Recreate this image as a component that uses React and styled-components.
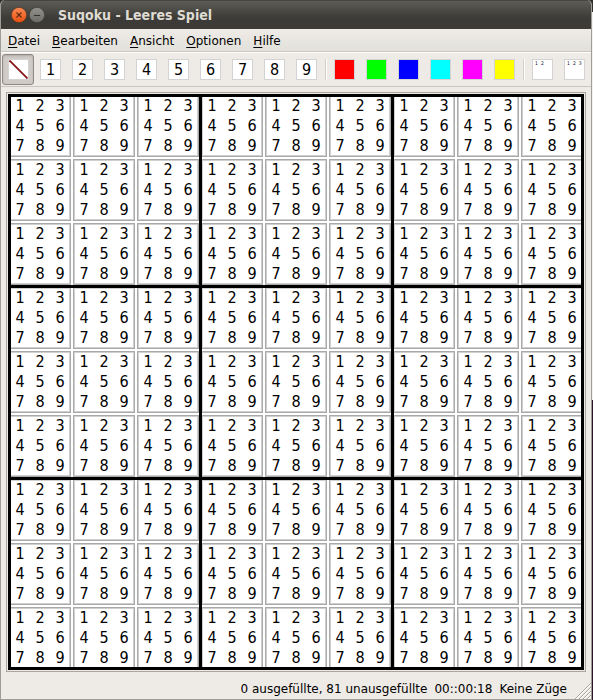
import React, { useState } from "react";
import styled, { createGlobalStyle } from "styled-components";

const GlobalStyle = createGlobalStyle`
  *, *::before, *::after { box-sizing: border-box; }
  body {
    margin: 0;
    background: linear-gradient(#2f2e2b 0 12px, #f2f1f0 12px 400px, #2c1428 400px);
    font-family: "DejaVu Sans", sans-serif;
    font-size: 12px;
    color: #000;
  }
  button { font: inherit; color: inherit; margin: 0; padding: 0; border: 0; background: none; }
`;

const Window = styled.main`
  display: flex;
  flex-direction: column;
  min-height: 100vh;
  margin-right: 1px;
  border: 1px solid #a09c97;
  border-top: 0;
  border-radius: 5px 5px 0 0;
  overflow: hidden;
  background: #eeebe7;
`;

const TitleBar = styled.header`
  display: flex;
  align-items: center;
  gap: 2px;
  height: 29px;
  margin: 0 -1px;
  padding: 0 11px 1px;
  border-top: 1px solid #454440;
  background: linear-gradient(#5d5c56, #3c3b37 60%);
`;

const Title = styled.h1`
  margin: 0 0 0 11px;
  font-family: "DejaVu Sans Condensed", "DejaVu Sans", sans-serif;
  font-size: 14px;
  line-height: 20px;
  font-weight: 700;
  color: #dfdbd2;
`;

const WindowButton = styled.button`
  display: flex;
  width: 16px;
  height: 16px;
`;

const MenuBar = styled.nav`
  display: flex;
  gap: 12px;
  height: 24px;
  padding: 1px 7px 0;
  align-items: center;
  background: linear-gradient(#efebe7, #e1e0d9);
  border-bottom: 1px solid #fff;
  box-shadow: inset 0 -1px #c9c6c1;
`;

const MenuItem = styled.button`
  line-height: 20px;
  &::first-letter { text-decoration: underline; text-underline-offset: 2px; }
`;

const ToolBar = styled.div`
  display: flex;
  height: 34px;
  padding: 1px 0 1px 1px;
  border-bottom: 1px solid #c9c6c1;
`;

const Tool = styled.button`
  display: flex;
  flex: none;
  align-items: center;
  justify-content: center;
  width: 32px;
  height: 31px;
  border: 1px solid ${(p) => (p.$active ? "#918b86" : "transparent")};
  border-radius: 3px;
  background: ${(p) => (p.$active ? "#d0cbc6" : "transparent")};
  box-shadow: ${(p) => (p.$active ? "inset 0 1px 2px #b0aaa5" : "none")};
  padding-left: 1px;
`;

const Swatch = styled.span`
  display: flex;
  justify-content: ${(p) => (p.$small ? "flex-start" : "center")};
  gap: 3px;
  width: 21px;
  height: 21px;
  padding: ${(p) => (p.$small ? "0 2px" : "0")};
  border: 1px solid #d3d3d3;
  background: ${(p) => p.$fill || "#fff"};
  font-family: "DejaVu Sans Condensed", "DejaVu Sans", sans-serif;
  font-size: ${(p) => (p.$small ? "5px" : "16px")};
  line-height: ${(p) => (p.$small ? "7px" : "20px")};
  color: ${(p) => (p.$small ? "#222" : "#000")};
`;

const Separator = styled.span`
  flex: none;
  width: 2px;
  height: 21px;
  margin: 5px 1px 0 3px;
  border-left: 1px solid #d3d0cb;
  background: #fff;
`;

const Frame = styled.section`
  margin: 5px 5px 0;
  padding: 1px;
  border: 1px solid #aaa59f;
`;

const Board = styled.div`
  position: relative;
  display: grid;
  grid-template-columns: repeat(3, 1fr);
  background: #fff;
  &::after {
    content: "";
    position: absolute;
    inset: 0;
    border: 3px solid #000;
    pointer-events: none;
  }
`;

const Block = styled.div`
  position: relative;
  display: grid;
  grid-template-columns: repeat(3, 1fr);
  &::after {
    content: "";
    position: absolute;
    inset: 0;
    border: solid #000;
    border-width: 2px 1px 1px 2px;
    pointer-events: none;
  }
`;

const Cell = styled.button`
  display: grid;
  grid-template-columns: repeat(3, 1fr);
  grid-auto-rows: 20px;
  margin: 1px;
  padding: 1px;
  box-shadow: inset 0 0 0 1px #a9a9a9, inset 0 0 0 2px #cfcfcf;
  font-family: "DejaVu Sans Condensed", "DejaVu Sans", sans-serif;
  font-size: 16px;
  line-height: 20px;
  text-align: center;
`;

const StatusBar = styled.footer`
  display: flex;
  justify-content: flex-end;
  align-items: flex-end;
  flex: 1;
  gap: 7px;
  padding-left: 8px;
  line-height: 20px;
  white-space: nowrap;
`;

const Grip = styled.svg`
  flex: none;
  width: 17px;
  height: 17px;
`;

const digits = [1, 2, 3, 4, 5, 6, 7, 8, 9];
const colours = [
  ["Rot", "#ff0000"],
  ["Grün", "#00ff00"],
  ["Blau", "#0000ff"],
  ["Cyan", "#00ffff"],
  ["Magenta", "#ff00ff"],
  ["Gelb", "#ffff00"],
];

function CloseIcon() {
  return (
    <svg width="16" height="16" viewBox="0 0 16 16">
      <defs>
        <linearGradient id="close" x2="0" y2="1">
          <stop stopColor="#fb8a54" />
          <stop offset="1" stopColor="#e8500f" />
        </linearGradient>
      </defs>
      <circle cx="8" cy="8" r="7.6" fill="url(#close)" stroke="#5a3422" strokeWidth="0.6" />
      <path d="M5.5 5.5l5 5m0-5l-5 5" stroke="#5a2a16" strokeWidth="1.1" />
    </svg>
  );
}

function MinimizeIcon() {
  return (
    <svg width="16" height="16" viewBox="0 0 16 16">
      <defs>
        <linearGradient id="minimize" x2="0" y2="1">
          <stop stopColor="#92918a" />
          <stop offset="1" stopColor="#6c6b66" />
        </linearGradient>
      </defs>
      <circle cx="8" cy="8" r="7.6" fill="url(#minimize)" stroke="#403f3b" strokeWidth="0.6" />
      <path d="M5 8.5h6" stroke="#33312d" />
    </svg>
  );
}

export default function App() {
  const [tool, setTool] = useState("clear");
  const toolProps = (id, label) => ({
    $active: tool === id,
    onClick: () => setTool(id),
    "aria-label": label,
    "aria-pressed": tool === id,
  });

  return (
    <>
      <GlobalStyle />
      <Window>
        <TitleBar>
          <WindowButton aria-label="Schließen"><CloseIcon /></WindowButton>
          <WindowButton aria-label="Minimieren"><MinimizeIcon /></WindowButton>
          <Title>Suqoku - Leeres Spiel</Title>
        </TitleBar>
        <MenuBar>
          {["Datei", "Bearbeiten", "Ansicht", "Optionen", "Hilfe"].map((m) => (
            <MenuItem key={m}>{m}</MenuItem>
          ))}
        </MenuBar>
        <ToolBar>
          <Tool {...toolProps("clear", "Leeren")}>
            <Swatch>
              <svg width="19" height="19" viewBox="0 0 19 19">
                <path d="M0.5 0.5L18.5 18.5" stroke="#8b1414" strokeWidth="1.8" />
              </svg>
            </Swatch>
          </Tool>
          {digits.map((d) => (
            <Tool key={d} {...toolProps(d, `${d}`)}><Swatch>{d}</Swatch></Tool>
          ))}
          <Separator />
          {colours.map(([name, fill]) => (
            <Tool key={name} {...toolProps(name, name)}><Swatch $fill={fill} /></Tool>
          ))}
          <Separator />
          <Tool {...toolProps("two", "Zwei Kandidaten")}>
            <Swatch $small><span>1</span><span>2</span></Swatch>
          </Tool>
          <Tool {...toolProps("three", "Drei Kandidaten")}>
            <Swatch $small><span>1</span><span>2</span><span>3</span></Swatch>
          </Tool>
        </ToolBar>
        <Frame>
          <Board>
            {digits.map((b) => (
              <Block key={b}>
                {digits.map((c) => (
                  <Cell key={c}>
                    {digits.map((d) => <span key={d}>{d}</span>)}
                  </Cell>
                ))}
              </Block>
            ))}
          </Board>
        </Frame>
        <StatusBar>
          <span>0 ausgefüllte, 81 unausgefüllte</span>
          <span>00::00:18</span>
          <span>Keine Züge</span>
          <Grip viewBox="0 0 17 17">
            <path d="M1 17L17 1M5 17L17 5M9 17L17 9M13 17L17 13" stroke="#aaa59f" />
            <path d="M2 17L17 2M6 17L17 6M10 17L17 10M14 17L17 14" stroke="#fff" />
          </Grip>
        </StatusBar>
      </Window>
    </>
  );
}
